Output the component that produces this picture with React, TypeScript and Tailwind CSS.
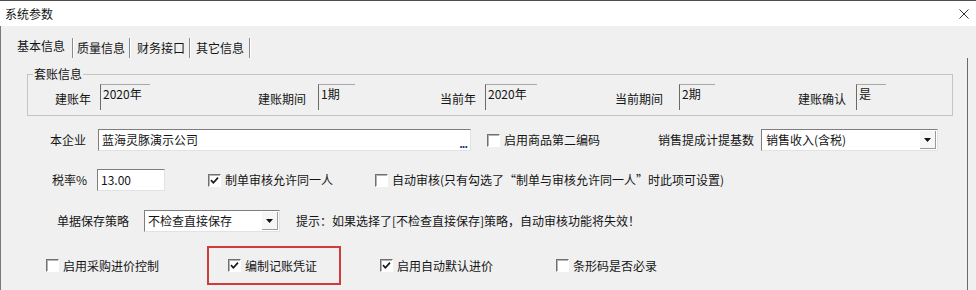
import React from "react";

const FONT = "font-[family-name:'Noto_Sans_CJK_SC','Noto_Sans',sans-serif]";

const CheckMark = () => (
  <svg viewBox="0 0 9 9" className="absolute left-[1px] top-[1px] w-[9px] h-[9px]">
    <polyline points="1,4.2 3.4,6.8 8,1.6" fill="none" stroke="#1a1a1a" strokeWidth="1.7" />
  </svg>
);

const Checkbox: React.FC<{ checked?: boolean; label: string }> = ({ checked, label }) => (
  <div className="flex items-center gap-[4px] shrink-0 whitespace-nowrap">
    <span className="relative w-[13px] h-[13px] shrink-0 bg-white border-t border-l border-t-[#707070] border-l-[#707070] border-b border-r border-b-white border-r-white shadow-[inset_1px_1px_0_#b4b4b4]">
      {checked && <CheckMark />}
    </span>
    <span>{label}</span>
  </div>
);

const ReadField: React.FC<{ value: string; className: string }> = ({ value, className }) => (
  <div
    className={
      "h-[26px] shrink-0 border-l border-t border-l-[#6a6a6a] border-t-[#a8a8a8] pl-[2px] pt-[1px] whitespace-nowrap " +
      className
    }
  >
    {value}
  </div>
);

const DropArrow = () => (
  <span className="w-[16px] h-[18px] shrink-0 flex items-center justify-center bg-[#f6f6f6] border-r border-r-[#9a9a9a] border-b border-b-[#9a9a9a]">
    <svg viewBox="0 0 7 4" className="w-[7px] h-[4px]">
      <polygon points="0,0 7,0 3.5,4" fill="#111" />
    </svg>
  </span>
);

const Tab: React.FC<{ label: string; ml: string; selected?: boolean }> = ({ label, ml, selected }) => (
  <span className={(selected ? "mb-[4px] " : "mb-[2px] ") + ml + " shrink-0 whitespace-nowrap"}>{label}</span>
);

const Sep: React.FC<{ ml: string }> = ({ ml }) => (
  <span className={ml + " w-[2px] h-[20px] shrink-0 border-l border-l-[#8a8a8a] border-r border-r-white"} />
);

export default function App() {
  return (
    <div className={"w-[976px] h-[290px] overflow-hidden bg-[#f0f0f0] text-[12px] leading-[16px] text-[#141414] " + FONT}>
      {/* title bar */}
      <div className="h-[26px] bg-white border-t border-t-[#4d4d4d] flex items-center justify-between pl-[5px] pr-[7px]">
        <span>系统参数</span>
        <svg viewBox="0 0 10 10" className="w-[10px] h-[10px]">
          <path d="M0.5 0.5 L9.5 9.5 M9.5 0.5 L0.5 9.5" stroke="#333" strokeWidth="1" />
        </svg>
      </div>

      <div className="h-[264px] flex flex-col border-l border-l-[#7a7a7a]">
        {/* tabs */}
        <div className="h-[32px] shrink-0 flex items-end">
          <Tab label="基本信息" ml="ml-[16px]" selected />
          <Sep ml="ml-[7px]" />
          <Tab label="质量信息" ml="ml-[3px]" />
          <Sep ml="ml-[4px]" />
          <Tab label="财务接口" ml="ml-[6px]" />
          <Sep ml="ml-[4px]" />
          <Tab label="其它信息" ml="ml-[5px]" />
          <Sep ml="ml-[5px]" />
        </div>

        {/* panel */}
        <div className="w-[967px] flex-1 flex flex-col border-r border-r-[#6a6a6a]">
          <fieldset className="ml-[26px] mt-[8px] w-[926px] border border-[#c4c4c4] pl-[5px] pb-[5px]">
            <legend className="px-[1px]">套账信息</legend>
            <div className="flex items-center mt-[2px]">
              <span className="ml-[22px] w-[36px] mt-[3px] shrink-0">建账年</span>
              <ReadField value="2020年" className="ml-[9px] w-[50px]" />
              <span className="ml-[108px] w-[48px] mt-[3px] shrink-0">建账期间</span>
              <ReadField value="1期" className="ml-[12px] w-[37px]" />
              <span className="ml-[85px] w-[36px] mt-[3px] shrink-0">当前年</span>
              <ReadField value="2020年" className="ml-[9px] w-[52px]" />
              <span className="ml-[78px] w-[48px] mt-[3px] shrink-0">当前期间</span>
              <ReadField value="2期" className="ml-[16px] w-[36px]" />
              <span className="ml-[83px] w-[48px] mt-[3px] shrink-0">建账确认</span>
              <ReadField value="是" className="ml-[10px] w-[30px]" />
            </div>
          </fieldset>

          {/* row: company */}
          <div className="mt-[13px] h-[22px] flex items-center">
            <span className="ml-[49px] w-[36px] shrink-0 whitespace-nowrap">本企业</span>
            <div className="ml-[12px] w-[373px] h-[22px] shrink-0 bg-white border-t border-l border-t-[#7e7e7e] border-l-[#7e7e7e] border-b border-r border-b-[#e2e2e2] border-r-[#e2e2e2] flex justify-between pl-[3px] pt-[2px]">
              <span className="whitespace-nowrap">蓝海灵豚演示公司</span>
              <span className="self-end mb-[2px] mr-[3px] text-[11px] leading-[10px] font-bold text-[#1c2a80] tracking-[-1px]">...</span>
            </div>
            <div className="ml-[16px]">
              <Checkbox label="启用商品第二编码" />
            </div>
            <span className="ml-[58px] w-[96px] shrink-0 whitespace-nowrap">销售提成计提基数</span>
            <div className="ml-[7px] w-[177px] h-[22px] shrink-0 bg-white border-t border-l border-t-[#7e7e7e] border-l-[#7e7e7e] border-b border-r border-b-[#e2e2e2] border-r-[#e2e2e2] flex items-center justify-between pl-[4px] pr-[1px]">
              <span className="whitespace-nowrap">销售收入(含税)</span>
              <DropArrow />
            </div>
          </div>

          {/* row: tax */}
          <div className="mt-[18px] h-[22px] flex items-center">
            <span className="ml-[51px] w-[36px] shrink-0 whitespace-nowrap">税率%</span>
            <div className="ml-[9px] w-[68px] h-[22px] shrink-0 bg-white border-t border-l border-t-[#7e7e7e] border-l-[#7e7e7e] border-b border-r border-b-[#e2e2e2] border-r-[#e2e2e2] pl-[3px] pt-[2px]">
              13.00
            </div>
            <div className="ml-[43px]">
              <Checkbox checked label="制单审核允许同一人" />
            </div>
            <div className="ml-[42px]">
              <Checkbox label="自动审核(只有勾选了“制单与审核允许同一人”时此项可设置)" />
            </div>
          </div>

          {/* row: save strategy */}
          <div className="mt-[19px] h-[22px] flex items-center">
            <span className="ml-[56px] w-[72px] shrink-0 whitespace-nowrap">单据保存策略</span>
            <div className="ml-[15px] w-[136px] h-[22px] shrink-0 bg-white border-t border-l border-t-[#7e7e7e] border-l-[#7e7e7e] border-b border-r border-b-[#e2e2e2] border-r-[#e2e2e2] flex items-center justify-between pl-[3px] pr-[1px]">
              <span className="whitespace-nowrap">不检查直接保存</span>
              <DropArrow />
            </div>
            <span className="ml-[16px] whitespace-nowrap">提示：如果选择了[不检查直接保存]策略，自动审核功能将失效！</span>
          </div>

          {/* row: options */}
          <div className="mt-[14px] h-[39px] flex items-center">
            <div className="ml-[45px] w-[113px]">
              <Checkbox label="启用采购进价控制" />
            </div>
            <div className="ml-[48px] w-[134px] h-[39px] shrink-0 border-2 border-[#d13b3b] flex items-center pl-[19px]">
              <Checkbox checked label="编制记账凭证" />
            </div>
            <div className="ml-[39px] w-[113px]">
              <Checkbox checked label="启用自动默认进价" />
            </div>
            <div className="ml-[63px]">
              <Checkbox label="条形码是否必录" />
            </div>
          </div>
        </div>
      </div>
    </div>
  );
}
